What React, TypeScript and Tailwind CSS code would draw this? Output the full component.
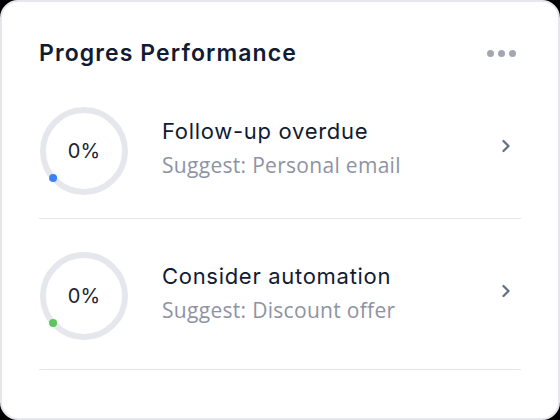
import { ChevronRight } from "lucide-react";

const tasks = [
  { title: "Follow-up overdue", hint: "Suggest: Personal email", value: 0, color: "#3b82f6" },
  { title: "Consider automation", hint: "Suggest: Discount offer", value: 0, color: "#5fc35f" },
];

// ring starts at the lower-left and runs clockwise
const START_DEG = 139;

function ProgressRing({ value, color }: { value: number; color: string }) {
  const r = 41;
  const c = 45;
  const a = ((START_DEG + value * 3.6) * Math.PI) / 180;
  const x = c + r * Math.cos(a);
  const y = c + r * Math.sin(a);

  return (
    <div className="relative w-[90px] h-[90px] shrink-0">
      <svg width="90" height="90" viewBox="0 0 90 90">
        <circle cx={c} cy={c} r={r} fill="none" stroke="#e6e7ec" strokeWidth="6" />
        <circle cx={x} cy={y} r="4" fill={color} />
      </svg>
      <span className="absolute inset-0 flex items-center justify-center text-[20px] text-[#1b2335] font-['Inter',sans-serif]">
        {value}%
      </span>
    </div>
  );
}

export default function App() {
  return (
    <div className="w-[560px] h-[420px] bg-black">
      <div className="w-full h-full bg-white border-2 border-[#e6e7ec] rounded-[18px] px-[37px] font-['Inter',sans-serif]">
        <div className="flex items-center justify-between pt-[30px] h-[72px]">
          <h2 className="text-[23px] font-semibold tracking-[1.1px] text-[#111b33]">
            Progres Performance
          </h2>
          <div className="flex gap-[4px] mr-[5px]">
            <span className="w-[7px] h-[7px] rounded-full bg-[#a3a7b3]" />
            <span className="w-[7px] h-[7px] rounded-full bg-[#a3a7b3]" />
            <span className="w-[7px] h-[7px] rounded-full bg-[#a3a7b3]" />
          </div>
        </div>

        {tasks.map((t) => (
          <div
            key={t.title}
            className="flex items-center pt-[32px] pb-[22px] last:pb-[28px] border-b border-[#e6e7ec] pr-[5px]"
          >
            <ProgressRing value={t.value} color={t.color} />
            <div className="ml-[33px] flex-1 flex flex-col gap-[4px] -mt-[6px]">
              <span className="text-[22px] tracking-[0.7px] text-[#111b33] leading-[30px]">
                {t.title}
              </span>
              <span className="text-[21px] tracking-[0.3px] text-[#8e93a3] leading-[30px] font-['Open_Sans',sans-serif]">
                {t.hint}
              </span>
            </div>
            <ChevronRight className="w-[20px] h-[20px] -mt-[10px] text-[#64708a]" strokeWidth={2.75} />
          </div>
        ))}
      </div>
    </div>
  );
}
